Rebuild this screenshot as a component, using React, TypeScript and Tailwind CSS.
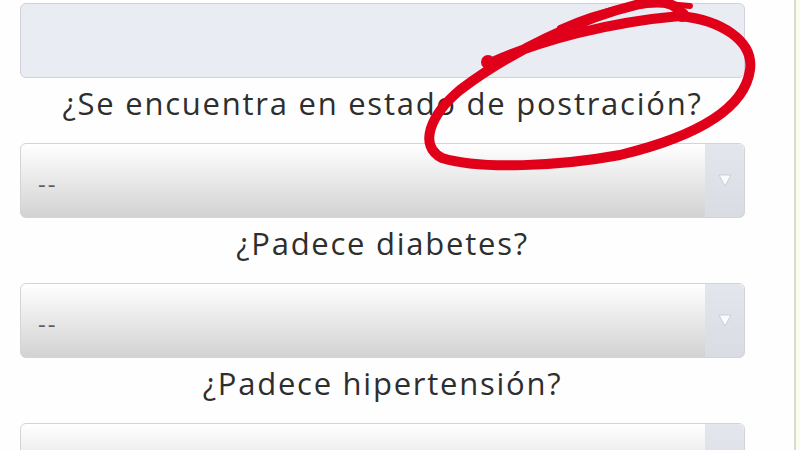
import React from 'react';

const Caret = () => (
  <div className="w-[39px] self-stretch flex items-center justify-center bg-gradient-to-b from-[#e3e6ec] to-[#d9dce3] rounded-r-[6px]">
    <svg width="14" height="13" viewBox="0 0 14 13">
      <path d="M1 1 L13 1 L7 12 Z" fill="#fafbfc" stroke="#c4c7ce" strokeWidth="0.8" />
    </svg>
  </div>
);

const SelectBox = ({ value = '--' }: { value?: string }) => (
  <div className="h-[75px] shrink-0 ml-[20px] mr-[49px] flex rounded-[6px] border border-[#d2d4d8] bg-gradient-to-b from-[#ffffff] to-[#d2d2d2] overflow-hidden">
    <div className="flex-1 flex items-center pl-[17px] pt-[6px] text-[24px] text-[#5e5e5e] tracking-[2px]">{value}</div>
    <Caret />
  </div>
);

const Label = ({ children }: { children: React.ReactNode }) => (
  <div className="h-[48px] shrink-0 mt-[1px] mb-[16px] ml-[20px] mr-[49px] flex items-center justify-center text-[31px] font-normal tracking-[1.75px] text-[#2e2e2e] whitespace-nowrap">
    {children}
  </div>
);

export default function App() {
  return (
    <div
      className="relative w-[800px] h-[450px] overflow-hidden bg-[#fdfdf8] flex"
      style={{ fontFamily: '"Open Sans", "Liberation Sans", sans-serif' }}
    >
      <div className="w-[794px] shrink-0 flex flex-col pt-[3px] bg-[#fefefe]">
        <div className="h-[75px] shrink-0 ml-[20px] mr-[49px] rounded-[6px] border border-[#cfd2d8] bg-[#e9ecf2]" />
        <Label>¿Se encuentra en estado de postración?</Label>
        <SelectBox />
        <Label>¿Padece diabetes?</Label>
        <SelectBox />
        <Label>¿Padece hipertensión?</Label>
        <SelectBox value="" />
      </div>
      <div className="w-[2px] shrink-0 bg-[#d9dccb]" />
      <div className="flex-1 bg-[#fbfbf0]" />

      <svg className="absolute left-0 top-0 pointer-events-none" width="800" height="450" viewBox="0 0 800 450">
        <path
          d="M488 64 C540 40 610 22 680 16 C720 20 754 40 750 70 C744 112 690 138 620 155 C560 166 480 170 442 158 C418 146 430 115 460 90 C510 52 580 18 640 4 C660 0 675 2 682 14"
          fill="none"
          stroke="#e1001a"
          strokeWidth="10"
          strokeLinecap="round"
          strokeLinejoin="round"
        />
        <path d="M560 28 C600 10 640 0 690 6" fill="none" stroke="#e1001a" strokeWidth="6" strokeLinecap="round" />
        <circle cx="488" cy="62" r="7" fill="#e1001a" />
        <circle cx="682" cy="15" r="7" fill="#e1001a" />
      </svg>
    </div>
  );
}
